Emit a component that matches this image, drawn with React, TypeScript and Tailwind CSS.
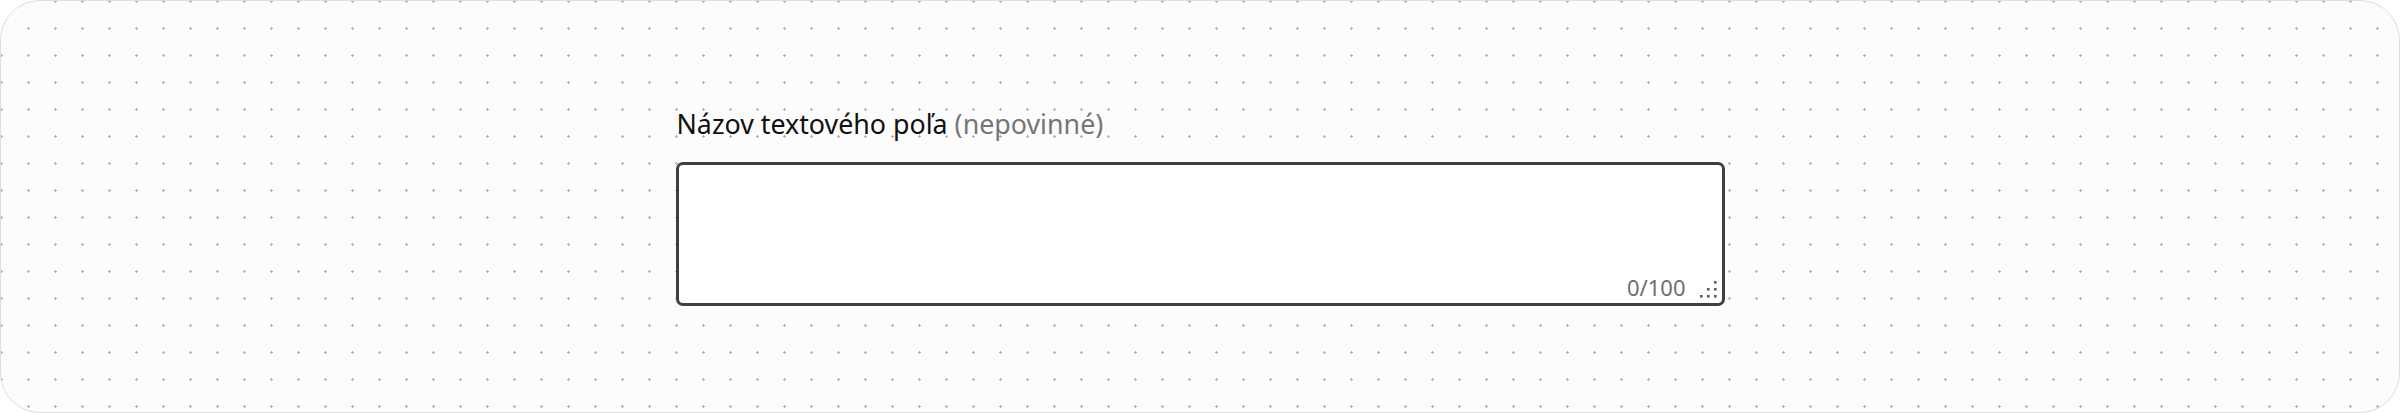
import React from "react";

export default function App() {
  return (
    <div className="w-[2400px] h-[413px] bg-white">
      <div
        className="w-full h-full rounded-[40px] border border-[#dedede] bg-[#fcfcfc] flex items-center justify-center overflow-hidden"
        style={{
          backgroundImage: "radial-gradient(circle, #b0b0b0 1px, transparent 1.4px)",
          backgroundSize: "27px 27px",
          backgroundPosition: "-13px -13px",
        }}
      >
        <div className="w-[1049px] flex flex-col" style={{ fontFamily: '"Noto Sans", "Open Sans", sans-serif' }}>
          <label className="text-[26.8px] leading-[34px] text-[#111111] mb-[21px] pl-[1px]">
            Názov textového poľa <span className="text-[#767676]">(nepovinné)</span>
          </label>
          <div className="relative">
            <textarea className="block w-full h-[144px] bg-white border-[3px] border-[#404040] rounded-[7px] resize-none outline-none" />
            <span className="absolute right-[39px] bottom-[5px] text-[22px] leading-[28px] text-[#6e6e6e]">0/100</span>
            <svg className="absolute right-[8px] bottom-[8px]" width="17" height="17" viewBox="0 0 17 17">
              <g fill="#5c5c5c">
                <rect x="14" y="0" width="2.6" height="2.6" />
                <rect x="7" y="7" width="2.6" height="2.6" />
                <rect x="14" y="7" width="2.6" height="2.6" />
                <rect x="0" y="14" width="2.6" height="2.6" />
                <rect x="7" y="14" width="2.6" height="2.6" />
                <rect x="14" y="14" width="2.6" height="2.6" />
              </g>
            </svg>
          </div>
        </div>
      </div>
    </div>
  );
}
